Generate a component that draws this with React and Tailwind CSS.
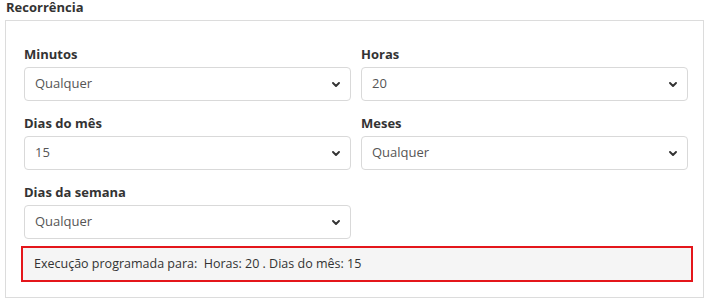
import React from "react";

const fields = [
  { label: "Minutos", value: "Qualquer" },
  { label: "Horas", value: "20" },
  { label: "Dias do mês", value: "15" },
  { label: "Meses", value: "Qualquer" },
  { label: "Dias da semana", value: "Qualquer" },
];

function Chevron() {
  return (
    <svg width="8" height="5" viewBox="0 0 8 5" className="shrink-0">
      <polyline
        points="1,1 4,4 7,1"
        fill="none"
        stroke="#333"
        strokeWidth="1.9"
        strokeLinecap="round"
        strokeLinejoin="round"
      />
    </svg>
  );
}

function Field({ label, value }) {
  return (
    <div className="flex flex-col">
      <label className="h-[18px] leading-[18px] text-[13px] font-bold text-[#333] mb-[4px]">
        {label}
      </label>
      <div className="h-[34px] flex items-center justify-between border border-[#d9d9d9] rounded-[4px] bg-white pl-[10px] pr-[10px]">
        <span className="text-[13px] text-[#555]">{value}</span>
        <Chevron />
      </div>
    </div>
  );
}

export default function App() {
  return (
    <div className="w-[708px] h-[300px] bg-white font-['Open_Sans',sans-serif]">
      <h4 className="h-[14px] leading-[14px] text-[13px] font-bold text-[#333] pl-[6px] mb-[6px]">
        Recorrência
      </h4>
      <div className="ml-[5px] w-[699px] h-[278px] border border-[#dcdcdc]">
        <div className="grid grid-cols-2 gap-x-[10px] gap-y-[13px] pt-[24px] pl-[18px] pr-[15px]">
          {fields.map((f) => (
            <Field key={f.label} label={f.label} value={f.value} />
          ))}
        </div>
        <div className="mt-[7px] ml-[15px] mr-[10px] h-[36px] flex items-center border-2 border-[#e4161b] bg-[#f5f5f5] pl-[11px] text-[12.5px] text-[#333] whitespace-pre">
          {"Execução programada para:  Horas: 20 . Dias do mês: 15"}
        </div>
      </div>
    </div>
  );
}
